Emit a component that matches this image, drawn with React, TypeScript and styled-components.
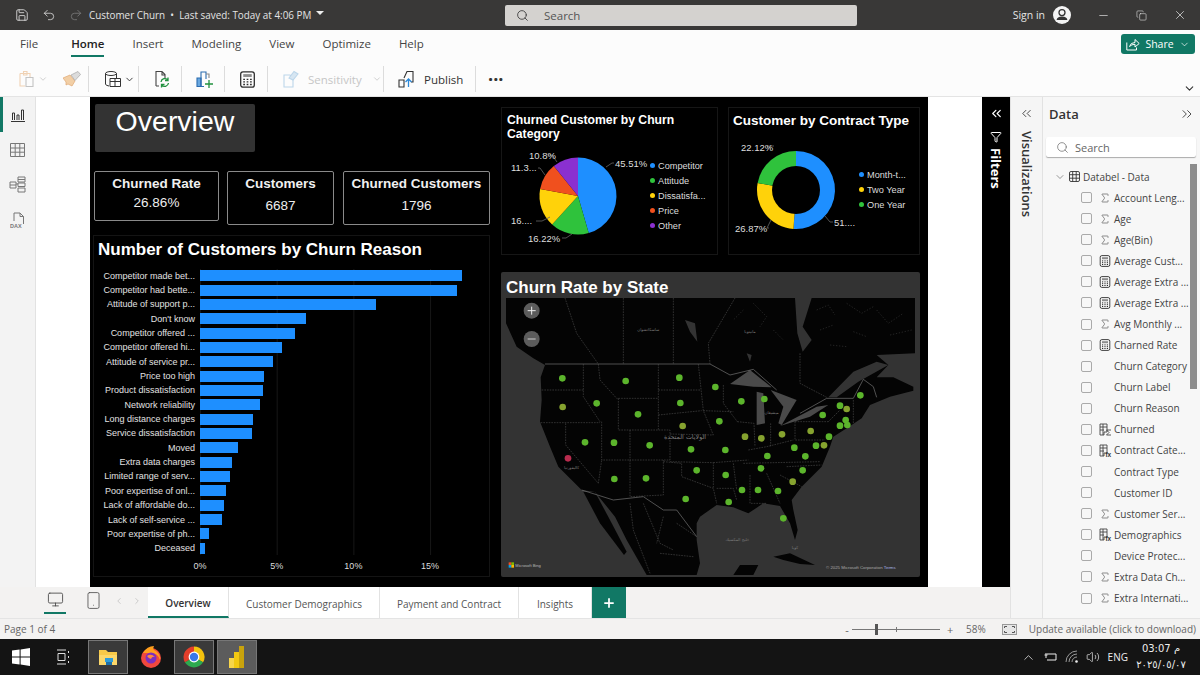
import React from 'react';
import styled, { createGlobalStyle } from 'styled-components';
import {
  Save, Undo2, Redo2, Search, Minus, Copy, X, ChevronDown, ChevronsLeft, ChevronsRight,
  ChevronRight, ChevronLeft, ChevronUp, Filter, Sigma, Plus, Monitor, Smartphone, Volume2,
} from 'lucide-react';

const bars = [
  ['Competitor made bet...', 262], ['Competitor had bette...', 257], ['Attitude of support p...', 176],
  ["Don't know", 106], ['Competitor offered ...', 95], ['Competitor offered hi...', 82],
  ['Attitude of service pr...', 73], ['Price too high', 64], ['Product dissatisfaction', 63],
  ['Network reliability', 60], ['Long distance charges', 53], ['Service dissatisfaction', 52],
  ['Moved', 38], ['Extra data charges', 32], ['Limited range of serv...', 30],
  ['Poor expertise of onl...', 26], ['Lack of affordable do...', 24], ['Lack of self-service ...', 22],
  ['Poor expertise of ph...', 9], ['Deceased', 5],
] as const;

const fields: [string, 'sigma' | 'calc' | 'fx' | 'bin' | 'none'][] = [
  ['Account Leng...', 'sigma'], ['Age', 'sigma'], ['Age(Bin)', 'sigma'], ['Average Cust...', 'calc'],
  ['Average Extra ...', 'calc'], ['Average Extra ...', 'calc'], ['Avg Monthly ...', 'sigma'], ['Charned Rate', 'calc'],
  ['Churn Category', 'none'], ['Churn Label', 'none'], ['Churn Reason', 'none'], ['Churned', 'bin'],
  ['Contract Cate...', 'fx'], ['Contract Type', 'none'], ['Customer ID', 'none'], ['Customer Ser...', 'sigma'],
  ['Demographics', 'fx'], ['Device Protec...', 'none'], ['Extra Data Ch...', 'sigma'], ['Extra Internati...', 'sigma'],
];

const menuItems = ['File', 'Home', 'Insert', 'Modeling', 'View', 'Optimize', 'Help'];
const pageTabs: [string, number][] = [['Overview', 81], ['Customer Demographics', 151], ['Payment and Contract', 139], ['Insights', 73]];

const BLUE = '#1e8fff';
const GREEN = '#2fc23c';
const YELLOW = '#ffd20a';
const RED = '#f0501e';
const PURPLE = '#8a30d0';

const point = (cx: number, cy: number, r: number, pct: number) => {
  const a = (pct / 100) * Math.PI * 2 - Math.PI / 2;
  return [cx + r * Math.cos(a), cy + r * Math.sin(a)];
};

const slice = (cx: number, cy: number, r: number, from: number, to: number) => {
  const [x1, y1] = point(cx, cy, r, from);
  const [x2, y2] = point(cx, cy, r, to);
  return `M${cx},${cy} L${x1},${y1} A${r},${r} 0 ${to - from > 50 ? 1 : 0} 1 ${x2},${y2} Z`;
};

const Slices = ({ cx, cy, r, parts }: { cx: number; cy: number; r: number; parts: [number, string][] }) => {
  let at = 0;
  return (
    <>
      {parts.map(([v, c]) => {
        const d = slice(cx, cy, r, at, at + v);
        at += v;
        return <path key={c} d={d} fill={c} />;
      })}
    </>
  );
};

const dots = [
  [187, 265], [377, 273], [538, 263], [646, 291], [724, 334], [793, 327], [1081, 316], [1020, 347], [968, 375],
  [290, 340], [541, 339], [414, 373], [658, 394], [1037, 390], [1042, 405], [1020, 407], [987, 440], [255, 457],
  [342, 458], [449, 466], [573, 478], [676, 480], [883, 473], [948, 467], [802, 498], [916, 499], [590, 541],
  [677, 555], [783, 535], [908, 541], [343, 567], [438, 565], [726, 600], [774, 600], [834, 603], [557, 627],
  [686, 636], [850, 685],
];
const oliveDots = [[188, 351], [548, 408], [1040, 357], [932, 423], [735, 440], [784, 445], [846, 433], [972, 466], [878, 575]];

const borders =
  'M125,300 L250,300 M122,398 L300,398 M250,222 L250,320 L300,395 M295,222 L300,270 L350,325 L475,325 M475,222 L475,420 ' +
  'M475,300 L600,300 M475,375 L605,362 M355,325 L355,420 L510,420 L510,510 M390,420 L390,510 L510,510 M305,395 L305,510 L390,510 ' +
  'M197,400 L197,465 L295,580 L305,510 M390,510 L390,620 L490,615 L490,510 M490,515 L545,520 L545,560 L640,595 L650,640 ' +
  'M510,515 L640,518 L640,595 M510,432 L640,435 M595,222 L610,362 L640,435 M610,362 L700,365 M670,285 L670,340 L712,395 ' +
  'M712,395 L762,400 L765,470 M640,518 L745,510 M650,595 L700,595 L710,630 M700,520 L710,600 M750,555 L750,640 L800,640 ' +
  'M800,550 L840,640 M730,520 L960,515 M745,480 L800,470 L880,450 M812,400 L812,470 M885,395 L885,450 L975,450 M885,395 L985,395 ' +
  'M840,555 L905,590 M860,530 L965,525 M985,395 L1020,360 M1060,330 L1060,400 ' +
  'M195,24 L230,130 L295,222 M370,24 L370,222 M520,24 L520,222 M705,24 L625,160 L630,222 M900,190 L900,280 L980,322 ' +
  'M390,640 L400,720 L450,850 M430,640 L480,760 L520,780 M490,680 L470,760 M530,700 L590,740 M480,790 L580,800';
const solidBorders =
  'M135,222 L630,222 L690,255 L760,238 L830,300 M900,370 L980,325 L1060,325 L1090,268 L1120,290 L1130,322 ' +
  'M245,600 L340,630 L430,620 L490,660 L530,660 L590,740';
const islands =
  'M950,60 L985,45 L1005,75 M1040,40 L1085,70 L1120,50 M1130,60 L1165,100 L1210,70 M960,120 L1000,105 M1060,125 L1100,140 ' +
  'M1170,135 L1235,120 M990,165 L1040,170 M760,40 L800,80 L780,110 M730,60 L700,90 M820,120 L850,150';

const MapView = () => (
  <MapSvg viewBox="18 24 1227 831" preserveAspectRatio="none">
    <path
      fill="#040404"
      d="M18,24 L1245,24 L1245,190 L1130,195 L1165,225 L1130,262 L1180,262 L1240,290 L1240,302 L1170,320 L1110,345 L1085,385 L1040,415 L1000,440
      L990,470 L965,530 L905,590 L875,630 L880,660 L893,720 L885,750 L870,700 L840,648 L790,640 L745,670 L700,652 L650,645 L600,680 L590,700
      L590,750 L600,820 L590,855 L440,855 L380,750 L345,680 L285,606 L245,600 L175,530 L150,470 L120,395 L125,330 L122,262 L135,225 L100,205
      L50,170 L18,100 Z"
    />
    <path fill="#040404" d="M250,605 L285,606 L330,690 L380,785 L372,795 L300,700 Z" />
    <path fill="#040404" d="M700,855 L720,825 L775,825 L760,855 Z M820,800 L870,790 L945,825 L900,822 L850,810 Z" />
    <path fill="#333" d="M885,24 L935,24 L908,110 L935,150 L908,185 L892,130 Z M985,322 L1060,245 L1130,215 L1165,225 L1075,275 L1010,322 Z" />
    <path fill="#4a4a4a" d="M690,282 L750,240 L815,292 L760,290 Z M770,305 L790,310 L795,400 L770,405 Z M812,300 L890,330 L845,405 L835,400 L850,350 Z M840,408 L950,350 L985,345 L930,380 Z" />
    <path fill="#333" d="M555,90 L585,100 L592,155 L570,125 Z M740,190 L755,195 L750,215 Z" />
    <path d={islands} fill="none" stroke="#333" strokeWidth="2" strokeDasharray="4 5" />
    <path d={solidBorders} fill="none" stroke="#777" strokeWidth="2" />
    <path d={borders} fill="none" stroke="#5c5c5c" strokeWidth="1.5" strokeDasharray="5 3" />
    <MapLabel x="555" y="446" fontSize="19">الولايات المتحدة</MapLabel>
    <MapLabel x="215" y="536" fontSize="12">كاليفورنيا</MapLabel>
    <MapLabel x="815" y="372" fontSize="12">ميشيغان</MapLabel>
    <MapLabel x="885" y="776" fontSize="12">كوبا</MapLabel>
    <MapLabel x="445" y="124" fontSize="12">ساسكاتشوان</MapLabel>
    <MapLabel x="750" y="128" fontSize="12">مانيتوبا</MapLabel>
    <MapLabel x="712" y="752" fontSize="12">خليج المكسيك</MapLabel>
    {dots.map(([x, y]) => <circle key={`${x}-${y}`} cx={x} cy={y} r="10" fill="#5cb52c" />)}
    {oliveDots.map(([x, y]) => <circle key={`${x}-${y}`} cx={x} cy={y} r="10" fill="#86a32f" />)}
    <circle cx="204" cy="505" r="10" fill="#b82c4e" />
    <circle cx="95" cy="62" r="24" fill="#5c5c5c" />
    <path d="M83,62 H107 M95,50 V74" stroke="#eee" strokeWidth="3" />
    <circle cx="95" cy="147" r="24" fill="#5c5c5c" />
    <path d="M83,147 H107" stroke="#ccc" strokeWidth="3" />
    <rect x="26" y="817" width="8" height="8" fill="#f25022" />
    <rect x="34" y="817" width="8" height="8" fill="#7fba00" />
    <rect x="26" y="825" width="8" height="8" fill="#00a4ef" />
    <rect x="34" y="825" width="8" height="8" fill="#ffb900" />
    <text x="46" y="830" fontSize="12" fill="#bbb" fontFamily="'Liberation Sans', sans-serif">Microsoft Bing</text>
    <text x="978" y="836" fontSize="13" fill="#aaa" fontFamily="'Liberation Sans', sans-serif">© 2025 Microsoft Corporation <tspan fill="#a9b6e8">Terms</tspan></text>
  </MapSvg>
);

const PieChart = () => (
  <svg width="148" height="113" viewBox="0 0 148 113">
    <Slices cx={76} cy={55} r={38.5} parts={[[45.51, BLUE], [16.22, GREEN], [16.17, YELLOW], [11.3, RED], [10.8, PURPLE]]} />
    <ChartLine d="M104,26 L110,22 H112" />
    <ChartLine d="M55,21 L50,14 H46" />
    <ChartLine d="M43,34 L38,27 H36" />
    <ChartLine d="M48,76 L40,80 H34" />
    <ChartLine d="M70,93 L64,97 H60" />
    <ChartLabel x={113} y={26}>45.51%</ChartLabel>
    <ChartLabel x={27} y={18}>10.8%</ChartLabel>
    <ChartLabel x={9} y={30}>11.3...</ChartLabel>
    <ChartLabel x={9} y={83}>16....</ChartLabel>
    <ChartLabel x={26} y={101}>16.22%</ChartLabel>
  </svg>
);

const DonutChart = () => (
  <svg width="130" height="122" viewBox="0 0 130 122">
    <Slices cx={67} cy={58} r={39} parts={[[51.01, BLUE], [26.87, YELLOW], [22.12, GREEN]]} />
    <circle cx="67" cy="58" r="24" fill="#000" />
    <ChartLine d="M96,84 L101,90 H104" />
    <ChartLine d="M42,88 L38,96 H40" />
    <ChartLine d="M42,16 L38,14 H45" />
    <ChartLabel x={12} y={19}>22.12%</ChartLabel>
    <ChartLabel x={105} y={94}>51....</ChartLabel>
    <ChartLabel x={6} y={100}>26.87%</ChartLabel>
  </svg>
);

const CalcIcon = ({ size }: { size: number }) => (
  <svg width={size} height={size} viewBox="0 0 12 12" fill="none" stroke="#2c2c2c" strokeWidth="0.9">
    <rect x="1.2" y=".6" width="9.6" height="10.8" rx="1.6" />
    <rect x="3" y="2.2" width="6" height="2" fill="#8c8c8c" stroke="none" />
    <path d="M3,5.9 H4.2 M5.4,5.9 H6.6 M7.8,5.9 H9 M3,7.7 H4.2 M5.4,7.7 H6.6 M7.8,7.7 H9 M3,9.5 H4.2 M5.4,9.5 H6.6 M7.8,9.5 H9" strokeWidth="1" />
  </svg>
);

const FxIcon = () => (
  <svg width="13" height="13" viewBox="0 0 13 13" fill="none" stroke="#444" strokeWidth="0.9">
    <path d="M1,1 H8 V9 H5 V12 H1 Z M1,4 H8 M1,7 H5 M4,1 V12" />
    <text x="6.4" y="12.6" fontSize="6.5" fontWeight="700" fill="#333" stroke="none" fontFamily="'Liberation Sans', sans-serif">fx</text>
  </svg>
);

const BinIcon = () => (
  <svg width="13" height="13" viewBox="0 0 13 13" fill="none" stroke="#444" strokeWidth="0.9">
    <path d="M1,1 H8 V9 H5 V12 H1 Z M1,4 H8 M1,7 H5 M4,1 V12" />
    <path d="M12,7 H7.5 L10,9.5 L7.5,12 H12" />
  </svg>
);

const FieldIcon = ({ kind }: { kind: string }) => {
  if (kind === 'sigma') return <Sigma size={12} strokeWidth={1.2} color="#444" />;
  if (kind === 'calc') return <CalcIcon size={12} />;
  if (kind === 'fx') return <FxIcon />;
  if (kind === 'bin') return <BinIcon />;
  return null;
};

export default function App() {
  return (
    <Page>
      <GlobalStyle />
      <TitleBar>
        <TitleLeft>
          <Save size={14} strokeWidth={1.4} color="#e6e6e6" />
          <Undo2 size={14} strokeWidth={1.4} color="#dcdcdc" />
          <Redo2 size={14} strokeWidth={1.4} color="#7a7a7a" />
          <DocTitle>Customer Churn &nbsp;•&nbsp; Last saved: Today at 4:06 PM</DocTitle>
          <Caret />
        </TitleLeft>
        <SearchBar>
          <Search size={13} strokeWidth={1.5} color="#333" />
          Search
        </SearchBar>
        <TitleRight>
          <SignIn>Sign in</SignIn>
          <svg width="18" height="18" viewBox="0 0 18 18">
            <circle cx="9" cy="9" r="9" fill="#f4f4f4" />
            <circle cx="9" cy="6.6" r="3" fill="none" stroke="#333" strokeWidth="1.3" />
            <path d="M3.6,14 Q4,10.5 9,10.5 Q14,10.5 14.4,14 Z" fill="#333" />
          </svg>
          <WindowButtons>
            <Minus size={13} strokeWidth={1.2} color="#eee" />
            <Copy size={11} strokeWidth={1.2} color="#eee" />
            <X size={14} strokeWidth={1.2} color="#eee" />
          </WindowButtons>
        </TitleRight>
      </TitleBar>

      <MenuRow>
        <MenuList>
          {menuItems.map((m) => <MenuItem key={m} $active={m === 'Home'}>{m}</MenuItem>)}
        </MenuList>
        <ShareButton>
          <svg width="14" height="13" viewBox="0 0 14 13" fill="none" stroke="#fff" strokeWidth="1">
            <path d="M.8,4.5 V12 H10.5 V9.5 M3.5,8.5 Q4.5,4.5 9,4.5 V1.5 L13.2,5.5 L9,9 V6.3 Q5.5,6.3 3.5,8.5 Z" />
          </svg>
          Share
          <ChevronDown size={11} strokeWidth={1.5} />
        </ShareButton>
      </MenuRow>

      <Ribbon>
        <RibbonGroup $w={89} $pad={18}>
          <svg width="18" height="18" viewBox="0 0 18 18" fill="none" stroke="#f0d2b4" strokeWidth="1.1">
            <path d="M2,3.5 H12 V7 M2,3.5 V16 H7 M5.5,1.5 H9 V5 H5.5 Z" />
            <path d="M8,7.5 H15 V16.5 H8 Z" stroke="#c4c4c4" />
          </svg>
          <ChevronDown size={10} color="#c8c8c8" />
          <svg width="18" height="16" viewBox="0 0 18 16" style={{ marginLeft: 13 }}>
            <path d="M0,7 L7,4 L12,10 L9,15 L5,13 L3,14 L3,11 Z" fill="#f2cfa6" stroke="#dfa872" strokeWidth="0.7" />
            <path d="M8,4 L15,0.5 L17.5,3.5 L12,9.5 Z" fill="#dcdcdc" stroke="#a8a8a8" strokeWidth="0.7" />
          </svg>
        </RibbonGroup>
        <RibbonGroup $w={50} $pad={15}>
          <svg width="18" height="18" viewBox="0 0 18 18" fill="none" stroke="#333" strokeWidth="1">
            <ellipse cx="7" cy="3.5" rx="5.5" ry="2" />
            <path d="M1.5,3.5 V14 Q1.5,15.5 5,16 M12.5,3.5 V8" />
            <path d="M6,8.5 H16.5 V16.5 H6 Z M6,11.5 H16.5 M11,8.5 V16.5" fill="#fff" />
          </svg>
          <ChevronDown size={11} color="#333" />
        </RibbonGroup>
        <RibbonGroup $w={43} $pad={14}>
          <svg width="18" height="18" viewBox="0 0 18 18" fill="none" strokeWidth="1.1">
            <path d="M3,16 V1.5 H9 L12,4.5 V8 M9,1.5 V5 H12 M3,16 H6" stroke="#444" />
            <path d="M8,12 A4,4 0 0 1 15,10 M15,7.5 V10.5 H12 M15.5,13 A4,4 0 0 1 8.5,15 M8.5,17.5 V14.5 H11.5" stroke="#21913f" strokeWidth="1.3" />
          </svg>
        </RibbonGroup>
        <RibbonGroup $w={43} $pad={14}>
          <svg width="18" height="18" viewBox="0 0 18 18" fill="none" strokeWidth="1.1">
            <path d="M1,16.5 V8 H5 V16.5 Z" fill="#6aa8e0" stroke="#2b6cb0" />
            <path d="M5,16.5 V2 H10 V9 M5,16.5 H8" stroke="#2b6cb0" />
            <path d="M10,4 H13 V8" stroke="#888" />
            <path d="M9,14 H17 M13,10 V18" stroke="#21913f" strokeWidth="1.3" />
          </svg>
        </RibbonGroup>
        <RibbonGroup $w={43} $pad={14}>
          <CalcIcon size={17} />
        </RibbonGroup>
        <RibbonGroup $w={116} $pad={14}>
          <svg width="17" height="18" viewBox="0 0 17 18" fill="none" stroke="#bcd6ea" strokeWidth="1.1">
            <path d="M2,5 H8 L11,8 V17 H2 Z" />
            <path d="M7,8 L12,1.5 L16,4 L11,10 Z" fill="#d7e6f2" />
          </svg>
          <Faded>Sensitivity</Faded>
          <ChevronDown size={10} color="#c8c8c8" />
        </RibbonGroup>
        <RibbonGroup $w={92} $pad={14}>
          <svg width="17" height="18" viewBox="0 0 17 18" fill="none" stroke="#333" strokeWidth="1.1">
            <path d="M1,10 H6 V17 H1 Z M6,8 L9,1.5 H15 V12 H13" />
            <path d="M10.5,17 V9 M7.5,12 L10.5,9 L13.5,12" stroke="#2b88d8" strokeWidth="1.3" />
          </svg>
          <RibbonText>Publish</RibbonText>
        </RibbonGroup>
        <MoreDots>···</MoreDots>
        <RibbonCollapse>
          <ChevronDown size={13} strokeWidth={2} color="#333" />
        </RibbonCollapse>
      </Ribbon>

      <Body>
        <ReportArea>
          <Main>
            <Rail>
              <RailItem $active>
                <svg width="14" height="14" viewBox="0 0 14 14" fill="none" stroke="#333" strokeWidth="1">
                  <path d="M1.5,12 V5 H3.5 V12 M6,12 V7 H8 V12 M10.5,12 V2 H12.5 V12 M0,13.5 H14" />
                </svg>
              </RailItem>
              <RailItem>
                <svg width="15" height="14" viewBox="0 0 15 14" fill="none" stroke="#777" strokeWidth="1">
                  <path d="M.5,.5 H14.5 V13.5 H.5 Z M.5,5 H14.5 M.5,9.2 H14.5 M5.2,.5 V13.5 M9.8,.5 V13.5" />
                </svg>
              </RailItem>
              <RailItem>
                <svg width="17" height="17" viewBox="0 0 17 17" fill="none" stroke="#777" strokeWidth="1">
                  <path d="M1,6 H7 V12 H1 Z M1,9 H7 M9,1 H16 V6 H9 Z M9,3.5 H16 M9,7 H16 V10.5 H9 Z M9,12 H16 V16 H9 Z M7,8 H9" />
                </svg>
              </RailItem>
              <RailItem>
                <svg width="16" height="16" viewBox="0 0 16 16" fill="none" stroke="#777" strokeWidth="1">
                  <path d="M4,9 V1 H10 L13.5,4.5 V12 M10,1 V4.5 H13.5" />
                  <text x="0" y="15.5" fontSize="5.5" fontWeight="700" fill="#777" stroke="none" fontFamily="'Liberation Sans', sans-serif">DAX</text>
                </svg>
              </RailItem>
            </Rail>

            <Canvas>
              <Report>
                <LeftColumn>
                  <OverviewBox>Overview</OverviewBox>
                  <KpiRow>
                    <Kpi $w={125} $h={50}><KpiTitle>Churned Rate</KpiTitle><KpiValue $gap={2}>26.86%</KpiValue></Kpi>
                    <Kpi $w={107} $h={54}><KpiTitle>Customers</KpiTitle><KpiValue $gap={5}>6687</KpiValue></Kpi>
                    <Kpi $w={147} $h={54}><KpiTitle>Churned Customers</KpiTitle><KpiValue $gap={5}>1796</KpiValue></Kpi>
                  </KpiRow>
                  <BarPanel>
                    <BigTitle>Number of Customers by Churn Reason</BigTitle>
                    <BarRows>
                      {bars.map(([label, w]) => (
                        <BarRow key={label}>
                          <BarLabel>{label}</BarLabel>
                          <BarTrack>
                            <Bar style={{ width: w }} />
                          </BarTrack>
                        </BarRow>
                      ))}
                    </BarRows>
                    <Axis>
                      {['0%', '5%', '10%', '15%'].map((t) => <AxisTick key={t}><span>{t}</span></AxisTick>)}
                    </Axis>
                  </BarPanel>
                </LeftColumn>

                <RightColumn>
                  <PieRow>
                    <ChartPanel $w={217}>
                      <SmallTitle>Churned Customer by Churn Category</SmallTitle>
                      <ChartBody>
                        <PieChart />
                        <Legend $top={17}>
                          <LegendItem $c={BLUE}>Competitor</LegendItem>
                          <LegendItem $c={GREEN}>Attitude</LegendItem>
                          <LegendItem $c={YELLOW}>Dissatisfa...</LegendItem>
                          <LegendItem $c={RED}>Price</LegendItem>
                          <LegendItem $c={PURPLE}>Other</LegendItem>
                        </Legend>
                      </ChartBody>
                    </ChartPanel>
                    <ChartPanel $w={192}>
                      <ContractTitle>Customer by Contract Type</ContractTitle>
                      <ChartBody>
                        <DonutChart />
                        <Legend $top={35}>
                          <LegendItem $c={BLUE}>Month-t...</LegendItem>
                          <LegendItem $c={YELLOW}>Two Year</LegendItem>
                          <LegendItem $c={GREEN}>One Year</LegendItem>
                        </Legend>
                      </ChartBody>
                    </ChartPanel>
                  </PieRow>
                  <MapPanel>
                    <MapTitle>Churn Rate by State</MapTitle>
                    <MapView />
                  </MapPanel>
                </RightColumn>
              </Report>
            </Canvas>

            <FiltersPane>
              <ChevronsLeft size={15} strokeWidth={2} color="#fff" />
              <FilterIcon><Filter size={12} strokeWidth={2} color="#fff" /></FilterIcon>
              <FiltersLabel>Filters</FiltersLabel>
            </FiltersPane>
          </Main>

          <TabsRow>
            <DeviceSlot>
              <DeviceButton $active><Monitor size={17} strokeWidth={1.2} color="#444" /></DeviceButton>
              <DeviceButton><Smartphone size={19} strokeWidth={1.1} color="#555" /></DeviceButton>
              <Arrows>
                <ChevronLeft size={10} color="#c4c4c4" />
                <ChevronRight size={10} color="#c4c4c4" />
              </Arrows>
            </DeviceSlot>
            {pageTabs.map(([name, w]) => (
              <PageTab key={name} $w={w} $active={name === 'Overview'}>{name}</PageTab>
            ))}
            <AddTab><Plus size={14} strokeWidth={3} color="#fff" /></AddTab>
          </TabsRow>
        </ReportArea>

        <VizPane>
          <ChevronsLeft size={15} strokeWidth={1.4} color="#333" />
          <VizLabel>Visualizations</VizLabel>
        </VizPane>

        <DataPane>
          <DataHeader>
            <DataTitle>Data</DataTitle>
            <ChevronsRight size={16} strokeWidth={1.3} color="#333" />
          </DataHeader>
          <DataSearch>
            <Search size={13} strokeWidth={1.3} color="#666" />
            Search
          </DataSearch>
          <TreeWrap>
            <TreeHead>
              <ChevronDown size={12} strokeWidth={1.2} color="#555" />
              <svg width="11" height="11" viewBox="0 0 11 11" fill="none" stroke="#333" strokeWidth="0.9">
                <rect x=".5" y=".5" width="10" height="10" rx="1.5" />
                <path d="M.5,3.7 H10.5 M.5,7.2 H10.5 M3.7,.5 V10.5 M7.2,.5 V10.5" />
              </svg>
              <span>Databel - Data</span>
            </TreeHead>
            {fields.map(([name, kind], i) => (
              <FieldRow key={`${name}-${i}`}>
                <Check />
                <FieldIconSlot><FieldIcon kind={kind} /></FieldIconSlot>
                <FieldName>{name}</FieldName>
              </FieldRow>
            ))}
            <ScrollThumb />
          </TreeWrap>
        </DataPane>
      </Body>

      <StatusBar>
        <span>Page 1 of 4</span>
        <StatusRight>
          <ZoomSign>-</ZoomSign>
          <ZoomSlider><ZoomTick /><ZoomThumb /></ZoomSlider>
          <ZoomSign>+</ZoomSign>
          <Percent>58%</Percent>
          <svg width="15" height="11" viewBox="0 0 15 11" fill="none" stroke="#555" strokeWidth="1">
            <rect x=".5" y=".5" width="14" height="10" fill="#e6e6e6" stroke="#999" />
            <path d="M2.5,4 V2.5 H5 M10,2.5 H12.5 V4 M12.5,7 V8.5 H10 M5,8.5 H2.5 V7" />
          </svg>
          <UpdateText>Update available (click to download)</UpdateText>
        </StatusRight>
      </StatusBar>

      <Taskbar>
        <TaskLeft>
          <svg width="18" height="18" viewBox="0 0 18 18" fill="#fff" style={{ marginLeft: 12 }}>
            <path d="M0,2.6 L7.6,1.5 V8.5 H0 Z M8.6,1.4 L18,0 V8.5 H8.6 Z M0,9.5 H7.6 V16.5 L0,15.4 Z M8.6,9.5 H18 V18 L8.6,16.6 Z" />
          </svg>
          <svg width="14" height="16" viewBox="0 0 14 16" fill="none" stroke="#ddd" strokeWidth="1" style={{ marginLeft: 26 }}>
            <path d="M1,1 H10 M1,15 H10 M2,4.5 H9 V11.5 H2 Z M12.5,2 V4 M12.5,7 V9 M12.5,12 V14" />
          </svg>
          <TaskTile $bg="#3a3a3a" $ml={18}>
            <svg width="20" height="20" viewBox="0 0 20 20">
              <path d="M1,3 H8 L10,5 H19 V18 H1 Z" fill="#f7c948" />
              <rect x="1" y="8" width="18" height="10" fill="#fbd76a" />
              <rect x="7" y="11" width="8" height="4" fill="#2d9bd8" />
              <rect x="8" y="15" width="6" height="3" fill="#1d6fa8" />
            </svg>
          </TaskTile>
          <TaskPlain>
            <svg width="22" height="24" viewBox="0 0 22 24">
              <circle cx="11" cy="13" r="10" fill="#f0483e" />
              <path d="M3,8 Q7,1 14,1 Q12,5 16,6 Q21,10 20,15 Q18,8 11,8 Z" fill="#ff9f1c" />
              <circle cx="11" cy="13" r="5.5" fill="#7b2fbf" />
              <path d="M7,11 Q11,8 15,12 Q12,11 11,14 Q9,14 7,11 Z" fill="#ff8a3c" />
            </svg>
          </TaskPlain>
          <TaskTile $bg="#3a3a3a" $ml={12}>
            <svg width="22" height="22" viewBox="0 0 22 22">
              <Slices cx={11} cy={11} r={10.5} parts={[[33.4, '#f4c20d'], [33.3, '#2da94f'], [33.3, '#e33e2b']]} />
              <circle cx="11" cy="11" r="5.4" fill="#fff" />
              <circle cx="11" cy="11" r="4.2" fill="#3b78e7" />
            </svg>
          </TaskTile>
          <TaskTile $bg="#5c5c5c" $ml={3}>
            <svg width="16" height="22" viewBox="0 0 16 22">
              <rect x="0" y="12" width="5" height="10" fill="#f7d54a" />
              <rect x="5" y="6" width="5" height="16" fill="#f2c811" />
              <rect x="10" y="0" width="5" height="22" fill="#c9a30c" />
            </svg>
          </TaskTile>
        </TaskLeft>
        <TaskRight>
          <ChevronUp size={15} strokeWidth={1.2} color="#eee" />
          <svg width="14" height="10" viewBox="0 0 14 10" fill="none" stroke="#eee" strokeWidth="1">
            <path d="M4,2 H13 V8 H4 M3,1 V6 M1.5,3 H4.5" />
          </svg>
          <svg width="14" height="14" viewBox="0 0 14 14" fill="none" stroke="#999" strokeWidth="1">
            <path d="M1,12 A11,11 0 0 1 12,1 M4,12 A8,8 0 0 1 12,4 M7,12 A5,5 0 0 1 12,7" />
            <circle cx="11.5" cy="11.5" r="1.3" fill="#eee" stroke="none" />
          </svg>
          <Volume2 size={14} strokeWidth={1.2} color="#eee" />
          <Lang>ENG</Lang>
          <Clock>
            <span>03:07 م</span>
            <DateText>٢٠٢٥/٠٥/٠٧</DateText>
          </Clock>
        </TaskRight>
      </Taskbar>
    </Page>
  );
}

const GlobalStyle = createGlobalStyle`
  html, body { margin: 0; padding: 0; }
  body { font-family: 'Open Sans', 'DejaVu Sans', sans-serif; }
  * { box-sizing: border-box; }
`;

const Page = styled.div`
  width: 1200px;
  height: 675px;
  overflow: hidden;
  display: flex;
  flex-direction: column;
  background: #fff;
`;

const TitleBar = styled.div`
  height: 30px;
  background: #393837;
  display: flex;
  align-items: center;
  color: #eee;
`;

const TitleLeft = styled.div`
  display: flex;
  align-items: center;
  gap: 13px;
  padding-left: 15px;
  width: 505px;
`;

const DocTitle = styled.span`
  font-size: 9.9px;
  color: #e4e4e4;
  margin-left: -7px;
  white-space: nowrap;
`;

const Caret = styled.span`
  width: 0;
  height: 0;
  margin-left: -8px;
  margin-top: -4px;
  border-left: 4px solid transparent;
  border-right: 4px solid transparent;
  border-top: 4px solid #eee;
`;

const SearchBar = styled.div`
  width: 352px;
  height: 21px;
  background: #d4d2cf;
  border-radius: 2px;
  display: flex;
  align-items: center;
  gap: 15px;
  padding-left: 11px;
  font-size: 11.5px;
  color: #555;
`;

const TitleRight = styled.div`
  margin-left: auto;
  display: flex;
  align-items: center;
  gap: 8px;
`;

const SignIn = styled.span`
  font-size: 10.5px;
  color: #e4e4e4;
`;

const WindowButtons = styled.div`
  display: flex;
  align-items: center;
  gap: 26px;
  width: 121px;
  padding-left: 18px;
`;

const MenuRow = styled.div`
  height: 30px;
  background: #fcfcfc;
  display: flex;
  align-items: flex-start;
  justify-content: space-between;
  padding: 0 5px 0 20px;
`;

const MenuList = styled.div`
  display: flex;
  gap: 28px;
  height: 30px;
`;

const MenuItem = styled.div<{ $active?: boolean }>`
  font-size: 11.5px;
  line-height: 28px;
  height: 27px;
  color: ${({ $active }) => ($active ? '#222' : '#444')};
  font-weight: ${({ $active }) => ($active ? 600 : 400)};
  border-bottom: ${({ $active }) => ($active ? '2px solid #117865' : 'none')};

  &:first-child { margin-right: 5px; }
`;

const ShareButton = styled.div`
  margin-top: 4px;
  width: 74px;
  height: 20px;
  border-radius: 3px;
  background: #117865;
  color: #fff;
  font-size: 10.5px;
  display: flex;
  align-items: center;
  justify-content: center;
  gap: 5px;
`;

const Ribbon = styled.div`
  height: 37px;
  background: #fcfcfc;
  border-bottom: 1px solid #e4e4e4;
  display: flex;
  align-items: flex-start;
  padding-top: 6px;
  position: relative;
`;

const RibbonGroup = styled.div<{ $w: number; $pad: number }>`
  width: ${({ $w }) => $w}px;
  height: 26px;
  padding-left: ${({ $pad }) => $pad}px;
  display: flex;
  align-items: center;
  gap: 2px;
  border-right: 1px solid #dcdcdc;
`;

const Faded = styled.span`
  font-size: 11.5px;
  color: #c6c6c6;
  margin-left: 7px;
  margin-right: 8px;
`;

const RibbonText = styled.span`
  font-size: 11.5px;
  color: #333;
  margin-left: 7px;
`;

const MoreDots = styled.span`
  font-size: 18px;
  font-weight: 700;
  line-height: 26px;
  color: #333;
  margin-left: 12px;
`;

const RibbonCollapse = styled.div`
  position: absolute;
  right: 4px;
  bottom: 1px;
  display: flex;
`;

const Body = styled.div`
  height: 521px;
  display: flex;
`;

const ReportArea = styled.div`
  width: 1010px;
  display: flex;
  flex-direction: column;
`;

const Main = styled.div`
  height: 490px;
  display: flex;
`;

const Rail = styled.div`
  width: 36px;
  background: #f3f3f3;
  border-right: 1px solid #e2e2e2;
  display: flex;
  flex-direction: column;
`;

const RailItem = styled.div<{ $active?: boolean }>`
  height: 35px;
  display: flex;
  align-items: center;
  justify-content: center;
  border-left: 3px solid ${({ $active }) => ($active ? '#117865' : 'transparent')};
  border-right: 3px solid transparent;
`;

const Canvas = styled.div`
  width: 946px;
  background: #fff;
  padding-left: 54px;
`;

const Report = styled.div`
  width: 838px;
  height: 490px;
  background: #000;
  display: flex;
  font-family: 'Liberation Sans', Arial, sans-serif;
  color: #fff;
`;

const LeftColumn = styled.div`
  width: 397px;
  margin-left: 3px;
  display: flex;
  flex-direction: column;
`;

const OverviewBox = styled.div`
  width: 160px;
  height: 48px;
  margin: 7px 0 0 2px;
  background: #333;
  border-radius: 2px;
  font-size: 28.5px;
  line-height: 34px;
  text-align: center;
  color: #fff;
`;

const KpiRow = styled.div`
  display: flex;
  align-items: flex-start;
  margin: 19px 0 0 1px;
  gap: 8px;
  height: 53px;
`;

const Kpi = styled.div<{ $w: number; $h: number }>`
  width: ${({ $w }) => $w}px;
  height: ${({ $h }) => $h}px;
  border: 1px solid #8a8a8a;
  border-radius: 2px;
  text-align: center;
  padding-top: 4px;
  &:nth-child(3) { margin-left: 1px; }
`;

const KpiTitle = styled.div`
  font-size: 13.5px;
  font-weight: 700;
  line-height: 16px;
  color: #f0f0f0;
`;

const KpiValue = styled.div<{ $gap: number }>`
  font-size: 13.5px;
  line-height: 18px;
  margin-top: ${({ $gap }) => $gap}px;
  color: #eee;
`;

const BarPanel = styled.div`
  width: 397px;
  height: 342px;
  margin-top: 11px;
  border: 1px solid #141414;
  display: flex;
  flex-direction: column;
`;

const BigTitle = styled.div`
  font-size: 17px;
  font-weight: 700;
  line-height: 24px;
  padding: 2px 0 0 4px;
  height: 25px;
  white-space: nowrap;
`;

const BarRows = styled.div`
  margin-top: 7.5px;
  display: flex;
  flex-direction: column;
`;

const BarRow = styled.div`
  height: 14.35px;
  display: flex;
  align-items: center;
`;

const BarLabel = styled.div`
  width: 101px;
  text-align: right;
  font-size: 9px;
  color: #e2e2e2;
  white-space: nowrap;
  margin-right: 5px;
`;

const BarTrack = styled.div`
  flex: 1;
  height: 100%;
  display: flex;
  align-items: center;
  background: linear-gradient(to right, #161616 1px, transparent 1px) 0 0 / 76.7px 100% repeat-x;
`;

const Bar = styled.div`
  height: 11px;
  background: ${BLUE};
`;

const Axis = styled.div`
  display: flex;
  margin: 4.5px 0 0 106px;
`;

const AxisTick = styled.div`
  width: 76.7px;
  flex: none;
  font-size: 9px;
  line-height: 12px;
  color: #ddd;

  span { display: inline-block; transform: translateX(-50%); }
`;

const RightColumn = styled.div`
  width: 419px;
  margin-left: 11px;
  display: flex;
  flex-direction: column;
`;

const PieRow = styled.div`
  display: flex;
  gap: 10px;
  margin-top: 10px;
`;

const ChartPanel = styled.div<{ $w: number }>`
  width: ${({ $w }) => $w}px;
  height: 148px;
  border: 1px solid #161616;
  display: flex;
  flex-direction: column;
`;

const SmallTitle = styled.div`
  font-size: 12.2px;
  font-weight: 700;
  line-height: 14px;
  padding: 5px 5px 0 5px;
  height: 33px;
`;

const ContractTitle = styled.div`
  font-size: 13.5px;
  font-weight: 700;
  line-height: 16px;
  padding: 5px 0 0 4px;
  height: 24px;
  white-space: nowrap;
`;

const ChartBody = styled.div`
  display: flex;
  align-items: flex-start;
`;

const ChartLine = styled.path`
  fill: none;
  stroke: #666;
  stroke-width: 0.8;
`;

const ChartLabel = styled.text`
  font-size: 9.5px;
  fill: #dedede;
  font-family: 'Liberation Sans', Arial, sans-serif;
`;

const Legend = styled.div<{ $top: number }>`
  margin-top: ${({ $top }) => $top}px;
  display: flex;
  flex-direction: column;
`;

const LegendItem = styled.div<{ $c: string }>`
  height: 15px;
  display: flex;
  align-items: center;
  gap: 3px;
  font-size: 9.2px;
  color: #dcdcdc;
  white-space: nowrap;

  &::before {
    content: '';
    width: 5px;
    height: 5px;
    border-radius: 50%;
    background: ${({ $c }) => $c};
  }
`;

const MapPanel = styled.div`
  margin-top: 17px;
  height: 305px;
  background: #333;
  border-radius: 2px;
  display: flex;
  flex-direction: column;
`;

const MapTitle = styled.div`
  font-size: 17px;
  font-weight: 700;
  line-height: 24px;
  padding: 4px 0 0 5px;
  height: 26px;
`;

const MapSvg = styled.svg`
  width: 409px;
  height: 277px;
  margin-left: 5px;
  display: block;
`;

const MapLabel = styled.text`
  fill: #7c7c7c;
  text-anchor: middle;
  font-family: 'DejaVu Sans', sans-serif;
`;

const FiltersPane = styled.div`
  width: 28px;
  background: #000;
  display: flex;
  flex-direction: column;
  align-items: center;
  padding-top: 9px;
`;

const FilterIcon = styled.div`
  margin-top: 10px;
  display: flex;
`;

const FiltersLabel = styled.div`
  writing-mode: vertical-rl;
  font-size: 13px;
  font-weight: 700;
  color: #fff;
  margin-top: 5px;
`;

const VizPane = styled.div`
  width: 32px;
  background: #f5f5f5;
  display: flex;
  flex-direction: column;
  align-items: center;
  padding-top: 9px;
  border-left: 1px solid #e2e2e2;
`;

const VizLabel = styled.div`
  writing-mode: vertical-rl;
  font-size: 13px;
  font-weight: 600;
  color: #333;
  margin-top: 10px;
`;

const DataPane = styled.div`
  width: 158px;
  background: #f7f7f7;
  border-left: 1px solid #e2e2e2;
  display: flex;
  flex-direction: column;
`;

const DataHeader = styled.div`
  height: 34px;
  flex: none;
  display: flex;
  align-items: center;
  justify-content: space-between;
  padding: 0 5px 0 6px;
`;

const DataTitle = styled.div`
  font-size: 13px;
  font-weight: 600;
  color: #333;
`;

const DataSearch = styled.div`
  width: 150px;
  height: 20px;
  flex: none;
  margin: 6px 0 0 3px;
  background: #fff;
  border-radius: 2px;
  box-shadow: 0 1px 1px #aaa;
  display: flex;
  align-items: center;
  gap: 6px;
  padding-left: 10px;
  font-size: 11px;
  color: #666;
`;

const TreeWrap = styled.div`
  position: relative;
  margin-top: 9px;
  padding-left: 11px;
  flex: 1;
  min-height: 0;
`;

const TreeHead = styled.div`
  height: 21px;
  display: flex;
  align-items: center;
  gap: 3px;
  font-size: 10px;
  color: #444;
`;

const FieldRow = styled.div`
  height: 21.08px;
  display: flex;
  align-items: center;
  padding-left: 27px;
`;

const Check = styled.span`
  width: 11px;
  height: 11px;
  border: 1px solid #aaa;
  border-radius: 2px;
  flex: none;
`;

const FieldIconSlot = styled.span`
  width: 14px;
  height: 14px;
  margin: 0 2px 0 6px;
  display: flex;
  align-items: center;
  justify-content: center;
  flex: none;
`;

const FieldName = styled.span`
  font-size: 10px;
  color: #444;
  white-space: nowrap;
`;

const ScrollThumb = styled.div`
  position: absolute;
  top: -2px;
  right: 3px;
  width: 7px;
  height: 225px;
  background: #8c8c8c;
`;

const TabsRow = styled.div`
  height: 31px;
  background: #f3f2f1;
  display: flex;
`;

const DeviceSlot = styled.div`
  width: 148px;
  display: flex;
  padding-left: 44px;
  align-items: flex-start;
`;

const DeviceButton = styled.div<{ $active?: boolean }>`
  width: 22px;
  height: 27px;
  display: flex;
  align-items: center;
  justify-content: center;
  margin-right: ${({ $active }) => ($active ? '16px' : '0')};
  border-bottom: ${({ $active }) => ($active ? '2px solid #117865' : 'none')};
`;

const Arrows = styled.div`
  display: flex;
  gap: 8px;
  height: 27px;
  align-items: center;
  margin-left: 10px;
`;

const PageTab = styled.div<{ $w: number; $active?: boolean }>`
  width: ${({ $w }) => $w}px;
  height: 31px;
  padding-top: 3px;
  background: #fff;
  border-right: 1px solid #e2e2e2;
  border-bottom: ${({ $active }) => ($active ? '2px solid #117865' : 'none')};
  display: flex;
  align-items: center;
  justify-content: center;
  font-size: 10px;
  font-weight: ${({ $active }) => ($active ? 600 : 400)};
  color: ${({ $active }) => ($active ? '#333' : '#555')};
`;

const AddTab = styled.div`
  width: 34px;
  height: 31px;
  background: #117865;
  display: flex;
  align-items: center;
  justify-content: center;
`;

const StatusBar = styled.div`
  height: 21px;
  background: #f3f2f1;
  border-top: 1px solid #e4e4e4;
  display: flex;
  align-items: center;
  justify-content: space-between;
  padding: 0 4px;
  font-size: 10px;
  color: #666;
`;

const StatusRight = styled.div`
  display: flex;
  align-items: center;
`;

const ZoomSign = styled.span`
  font-size: 11px;
  width: 8px;
  text-align: center;
`;

const ZoomSlider = styled.div`
  position: relative;
  width: 88px;
  height: 1px;
  background: #777;
  margin: 0 6px 0 1px;
`;

const ZoomThumb = styled.span`
  position: absolute;
  left: 23px;
  top: -5px;
  width: 3px;
  height: 11px;
  background: #555;
`;

const ZoomTick = styled.span`
  position: absolute;
  left: 44px;
  top: -2px;
  width: 1px;
  height: 5px;
  background: #777;
`;

const Percent = styled.span`
  margin: 0 16px 0 12px;
`;

const UpdateText = styled.span`
  margin-left: 12px;
`;

const Taskbar = styled.div`
  height: 36px;
  background: #141414;
  display: flex;
  align-items: center;
  justify-content: space-between;
`;

const TaskLeft = styled.div`
  display: flex;
  align-items: center;
  height: 100%;
`;

const TaskTile = styled.div<{ $bg: string; $ml: number }>`
  width: 40px;
  height: 34px;
  margin-left: ${({ $ml }) => $ml}px;
  background: ${({ $bg }) => $bg};
  border: 1px solid #777;
  display: flex;
  align-items: center;
  justify-content: center;
`;

const TaskPlain = styled.div`
  margin-left: 12px;
  display: flex;
`;

const TaskRight = styled.div`
  display: flex;
  align-items: center;
  gap: 7.4px;
  color: #eee;
  padding-right: 15px;
`;

const Lang = styled.span`
  font-size: 10px;
  width: 22px;
`;

const Clock = styled.div`
  display: flex;
  flex-direction: column;
  align-items: center;
  width: 48px;
  font-size: 10px;
  line-height: 16px;
  font-family: 'DejaVu Sans', 'Noto Sans', sans-serif;
`;

const DateText = styled.span`
  direction: ltr;
  unicode-bidi: bidi-override;
  white-space: nowrap;
`;
